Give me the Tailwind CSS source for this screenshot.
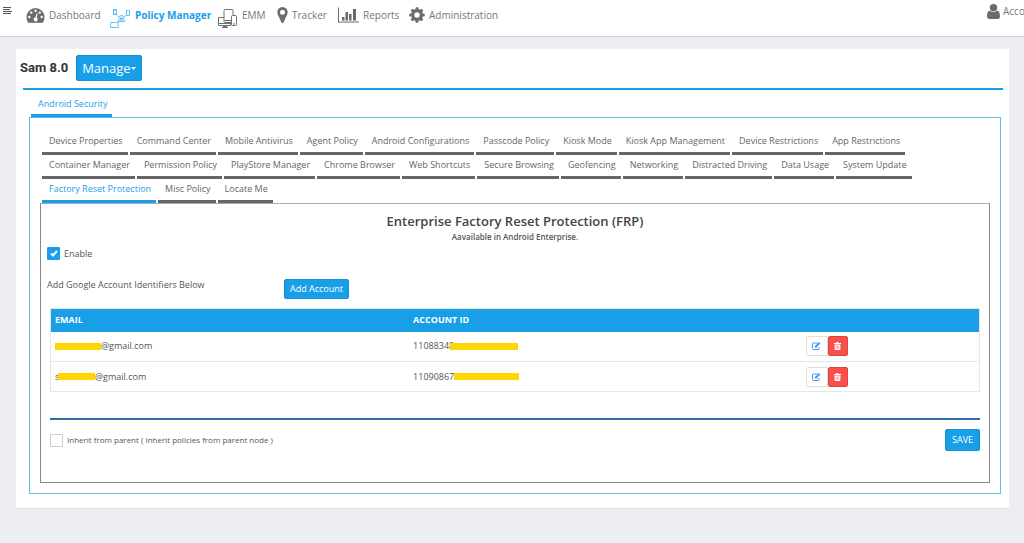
<!DOCTYPE html>
<html lang="en">
<head>
<meta charset="utf-8">
<meta name="viewport" content="width=device-width, initial-scale=1">
<title>Policy Manager</title>
<script src="https://cdn.jsdelivr.net/npm/@tailwindcss/browser@4"></script>
</head>
<body class="min-h-screen overflow-x-hidden bg-[#edeef3] font-['Open_Sans',sans-serif] text-[9px] leading-3 text-[#555]">
<header class="flex h-[37px] items-start overflow-hidden border-b border-[#d5d6da] bg-white text-[10px] leading-[14px] text-[#777]">
  <button type="button" aria-label="Menu" class="mt-[7px] ml-[3px] h-2 w-[9px] shrink-0">
    <svg viewBox="0 0 9 8" class="block h-2 w-[9px]" stroke="#555" stroke-width="1"><path d="M0 .5h8M0 2.500h7M0 4.500h9M0 6.500h8"/></svg>
  </button>
  <nav class="ml-[14px] flex flex-1 items-start">
    <a href="#" class="flex w-[84px] shrink-0 items-start gap-1">
      <svg viewBox="0 0 18 15" class="mt-2 block h-[15px] w-[19px]"><path fill="#6b6b6b" d="M9 0a9 9 0 0 0-9 9c0 2 .5 3.700 1.400 5.200.2.400.5.500.8.500h13.600c.3 0 .6-.1.800-.5A9.500 9.500 0 0 0 18 9a9 9 0 0 0-9-9z"/><g fill="#fff"><circle cx="2.800" cy="9" r="1.200"/><circle cx="4.700" cy="4.600" r="1.200"/><circle cx="9" cy="2.700" r="1.200"/><circle cx="13.300" cy="4.600" r="1.200"/><circle cx="15.200" cy="9" r="1.200"/><path d="M10.200 5.200l1 .3-1 4a2.100 2.100 0 1 1-1.200-.3z"/></g></svg>
      <span class="mt-2">Dashboard</span>
    </a>
    <a href="#" class="flex w-[108px] shrink-0 items-start gap-[5px] font-bold text-[#189fe8]">
      <svg viewBox="0 0 20 20" class="mt-[8px] block h-5 w-5" fill="none" stroke="#42b2ed" stroke-width=".8"><rect x="3.500" y="1.500" width="3" height="5"/><path d="M3 2h4M3 6h4M16.500 2.500h3v5h-3zM.7 14.500h7.500v5H.7zM7 7.500l2.500 1.500M16 7.500l-2.500 1.500M7.500 14l1.500-1.500"/><circle cx="11.500" cy="9" r="1.700"/><path d="M8.500 13.500c0-3 1.300-3.200 3-3.200s3 .2 3 3.200zM10 10.500l1.500 2.500 1.500-2.500"/></svg>
      <span class="mt-2">Policy Manager</span>
    </a>
    <a href="#" class="flex w-[59px] shrink-0 items-start gap-1">
      <svg viewBox="0 0 20 20" class="mt-[9px] block h-5 w-5" fill="#fff" stroke="#707070" stroke-width="1"><path d="M.5 8.500h12v8H.5zM1 14.500h11M5 17.500h4M4 18.500h6"/><rect x="6" y=".5" width="9" height="13" rx="1"/><path d="M6.500 11.500h8"/><rect x="13.500" y="6.500" width="5" height="10" rx="1"/><path d="M15 15h2"/></svg>
      <span class="mt-2">EMM</span>
    </a>
    <a href="#" class="flex w-[61px] shrink-0 items-start gap-1">
      <svg viewBox="0 0 11 16" class="mt-[7px] block h-4 w-[11px]" fill="#6b6b6b" fill-rule="evenodd"><path d="M5.500 0A5.200 5.200 0 0 0 .3 5.300C.3 8 3 11.500 4.300 15.200c.3.900 2.100.9 2.400 0C8 11.500 10.700 8 10.700 5.300A5.200 5.200 0 0 0 5.500 0zm0 2.800a2.500 2.500 0 1 1 0 5 2.500 2.500 0 0 1 0-5z"/></svg>
      <span class="mt-2">Tracker</span>
    </a>
    <a href="#" class="flex w-[71px] shrink-0 items-start gap-1">
      <svg viewBox="0 0 21 16" class="mt-[7px] block h-4 w-[21px]" fill="#6b6b6b"><path d="M0 .5h1v14h20v1H0zM4 10h2.500v3.500H4zM7.500 5H10v8.500H7.500zM11 7h2.500v6.500H11zM15 2h3v11.500h-3z"/></svg>
      <span class="mt-2">Reports</span>
    </a>
    <a href="#" class="flex shrink-0 items-start gap-1">
      <svg viewBox="0 0 16 16" class="mt-[7px] block h-4 w-4" fill="#6b6b6b" fill-rule="evenodd"><path d="M6.800.3h2.400l.4 2 1.300.5 1.700-1.100 1.700 1.700-1.100 1.700.5 1.300 2 .4v2.400l-2 .4-.5 1.300 1.100 1.700-1.700 1.700-1.700-1.100-1.300.5-.4 2H6.800l-.4-2-1.300-.5-1.700 1.100-1.700-1.700 1.100-1.700-.5-1.300-2-.4V6.800l2-.4.5-1.300-1.100-1.700 1.700-1.700 1.700 1.100 1.300-.5zM8 5.300a2.700 2.700 0 1 0 0 5.400 2.700 2.700 0 0 0 0-5.400z"/></svg>
      <span class="mt-2">Administration</span>
    </a>
  </nav>
  <a href="#" class="mt-1 flex w-[37px] shrink-0 items-start gap-[3px] whitespace-nowrap">
    <svg viewBox="0 0 13 15" class="block h-[15px] w-[13px] shrink-0" fill="#6b6b6b"><circle cx="6.500" cy="3.800" r="3.700"/><path d="M3 6.800C.7 7 0 9.500 0 12.300 0 14 1 15 2.500 15h8c1.500 0 2.500-1 2.500-2.700 0-2.800-.7-5.300-3-5.500a4.900 4.900 0 0 1-7 0z"/></svg>
    <span>Acco</span>
  </a>
</header>

<main class="mt-3 mr-[15px] mb-9 ml-4 border-b border-[#e2e3e6] bg-white px-[7px] pt-[6px] pb-[14px]">
  <div class="-ml-[3px] flex items-center gap-2">
    <h1 class="font-['Roboto',sans-serif] text-[13px] leading-5 font-bold text-[#333]">Sam 8.0</h1>
    <button type="button" class="flex h-[26px] items-center rounded-[2px] border border-[#1690d4] bg-[#189fe8] px-[5px] text-[13px] leading-4 text-white">Manage<svg viewBox="0 0 5 3" class="h-[3px] w-[5px]" fill="#fff"><path d="M0 0h5L2.500 3z"/></svg></button>
  </div>
  <div class="mt-[7px] -mr-px h-[2px] bg-[#189fe8]"></div>

  <div class="mr-px ml-[6px]">
    <a href="#" class="mt-[8px] ml-[2px] inline-block border-b-[3px] border-[#189fe8] pr-[5px] pb-1 pl-[7px] align-top text-[#189fe8]">Android Security</a>
    <section class="border border-[#60bdea] px-[10px] pt-[17px] pb-[10px]">
      <nav class="flex flex-wrap gap-x-[2px] gap-y-1 pr-[68px] pl-[2px] whitespace-nowrap text-[#666]">
        <a href="#" class="border-b-[3px] border-[#666] pr-[5px] pb-[5px] pl-[7px]">Device Properties</a>
        <a href="#" class="border-b-[3px] border-[#666] pr-[5px] pb-[5px] pl-[7px]">Command Center</a>
        <a href="#" class="border-b-[3px] border-[#666] pr-[5px] pb-[5px] pl-[7px]">Mobile Antivirus</a>
        <a href="#" class="border-b-[3px] border-[#666] pr-[5px] pb-[5px] pl-[7px]">Agent Policy</a>
        <a href="#" class="border-b-[3px] border-[#666] pr-[5px] pb-[5px] pl-[7px]">Android Configurations</a>
        <a href="#" class="border-b-[3px] border-[#666] pr-[5px] pb-[5px] pl-[7px]">Passcode Policy</a>
        <a href="#" class="border-b-[3px] border-[#666] pr-[5px] pb-[5px] pl-[7px]">Kiosk Mode</a>
        <a href="#" class="border-b-[3px] border-[#666] pr-[5px] pb-[5px] pl-[7px]">Kiosk App Management</a>
        <a href="#" class="border-b-[3px] border-[#666] pr-[5px] pb-[5px] pl-[7px]">Device Restrictions</a>
        <a href="#" class="border-b-[3px] border-[#666] pr-[5px] pb-[5px] pl-[7px]">App Restrictions</a>
        <a href="#" class="border-b-[3px] border-[#666] pr-[5px] pb-[5px] pl-[7px]">Container Manager</a>
        <a href="#" class="border-b-[3px] border-[#666] pr-[5px] pb-[5px] pl-[7px]">Permission Policy</a>
        <a href="#" class="border-b-[3px] border-[#666] pr-[5px] pb-[5px] pl-[7px]">PlayStore Manager</a>
        <a href="#" class="border-b-[3px] border-[#666] pr-[5px] pb-[5px] pl-[7px]">Chrome Browser</a>
        <a href="#" class="border-b-[3px] border-[#666] pr-[5px] pb-[5px] pl-[7px]">Web Shortcuts</a>
        <a href="#" class="border-b-[3px] border-[#666] pr-[5px] pb-[5px] pl-[7px]">Secure Browsing</a>
        <a href="#" class="border-b-[3px] border-[#666] pr-[5px] pb-[5px] pl-[7px]">Geofencing</a>
        <a href="#" class="border-b-[3px] border-[#666] pr-[5px] pb-[5px] pl-[7px]">Networking</a>
        <a href="#" class="border-b-[3px] border-[#666] pr-[5px] pb-[5px] pl-[7px]">Distracted Driving</a>
        <a href="#" class="border-b-[3px] border-[#666] pr-[5px] pb-[5px] pl-[7px]">Data Usage</a>
        <a href="#" class="border-b-[3px] border-[#666] pr-[5px] pb-[5px] pl-[7px]">System Update</a>
        <a href="#" aria-current="page" class="border-b-[3px] border-[#189fe8] pr-[5px] pb-[5px] pl-[7px] text-[#189fe8]">Factory Reset Protection</a>
        <a href="#" class="border-b-[3px] border-[#666] pr-[5px] pb-[5px] pl-[7px]">Misc Policy</a>
        <a href="#" class="border-b-[3px] border-[#666] pr-[5px] pb-[5px] pl-[7px]">Locate Me</a>
      </nav>

      <div class="border border-[#888] border-t-[#aaa] px-[9px] pt-[9px] pb-[31px]">
        <h2 class="text-center text-[13px] leading-4 font-semibold text-[#444]">Enterprise Factory Reset Protection (FRP)</h2>
        <p class="mt-[2px] text-center text-[8px] leading-3 font-semibold text-[#555]">Aavailable in Android Enterprise.</p>
        <div class="-ml-[3px]">
          <label class="mt-[4px] flex w-fit items-center gap-1">
            <span class="grid size-[13px] place-items-center">
              <input type="checkbox" checked class="col-start-1 row-start-1 size-[13px] appearance-none rounded-[1px] border border-[#ccc] checked:border-[#189fe8] checked:bg-[#189fe8]">
              <svg viewBox="0 0 8 7" class="pointer-events-none z-10 col-start-1 row-start-1 h-[7px] w-2" fill="none" stroke="#fff" stroke-width="2"><path d="M1 3.500l2 2 4-4.500"/></svg>
            </span>
            Enable
          </label>
          <div class="mt-[19px] flex items-start">
            <p class="w-[237px]">Add Google Account Identifiers Below</p>
            <button type="button" class="h-5 rounded-[2px] border border-[#1690d4] bg-[#189fe8] px-[5px] text-white">Add Account</button>
          </div>
        </div>
        <table class="mt-[9px] w-full table-fixed border-collapse border border-[#e6e6e6] text-left">
          <colgroup><col class="w-[38.6%]"><col><col class="w-[18.7%]"></colgroup>
          <thead class="bg-[#189fe8] text-white">
            <tr class="h-[23px]"><th class="pl-1 font-bold" scope="col">EMAIL</th><th class="pl-1 font-bold" scope="col">ACCOUNT ID</th><th aria-label="Actions"></th></tr>
          </thead>
          <tbody>
            <tr class="h-[30px] border-b border-[#e6e6e6]">
              <td class="pl-1"><span class="flex items-center"><i class="h-[7px] w-[46px] bg-[#ffd600]"></i>@gmail.com</span></td>
              <td class="pl-1"><span class="flex items-center">11088348<i class="z-10 -ml-1 h-[7px] w-[68px] bg-[#ffd600]"></i></span></td>
              <td><div class="flex">
                <button type="button" aria-label="Edit" class="grid h-5 w-[22px] place-items-center rounded-l-[2px] border border-[#ddd] bg-white"><svg viewBox="0 0 9 8" class="h-2 w-[9px]" fill="none" stroke="#3f9bf0"><path d="M5.500 1H1.500Q.5 1 .5 2v4.500q0 1 1 1H6q1 0 1-1V5"/><path stroke-width="2" d="M3.200 5.300L7.700.8"/></svg></button>
                <button type="button" aria-label="Delete" class="grid h-5 w-5 place-items-center rounded-[2px] border border-[#dc4545] bg-[#f9504e]"><svg viewBox="0 0 7 8" class="h-2 w-[7px]"><path fill="#fff" d="M0 1h2.200l.5-1h1.600l.5 1H7v1H0zM.6 2.400h5.800V7q0 1-1 1H1.600q-1 0-1-1z"/><path stroke="#f9504e" stroke-width=".5" d="M2.200 3.500v3.300M3.500 3.500v3.300M4.800 3.500v3.300"/></svg></button>
              </div></td>
            </tr>
            <tr class="h-[30px]">
              <td class="pl-1"><span class="flex items-center"><span class="w-[3px]">s</span><i class="z-10 h-[7px] w-[37px] bg-[#ffd600]"></i>@gmail.com</span></td>
              <td class="pl-1"><span class="flex items-center">11090867<i class="z-10 h-[7px] w-[65px] bg-[#ffd600]"></i></span></td>
              <td><div class="flex">
                <button type="button" aria-label="Edit" class="grid h-5 w-[22px] place-items-center rounded-l-[2px] border border-[#ddd] bg-white"><svg viewBox="0 0 9 8" class="h-2 w-[9px]" fill="none" stroke="#3f9bf0"><path d="M5.500 1H1.500Q.5 1 .5 2v4.500q0 1 1 1H6q1 0 1-1V5"/><path stroke-width="2" d="M3.200 5.300L7.700.8"/></svg></button>
                <button type="button" aria-label="Delete" class="grid h-5 w-5 place-items-center rounded-[2px] border border-[#dc4545] bg-[#f9504e]"><svg viewBox="0 0 7 8" class="h-2 w-[7px]"><path fill="#fff" d="M0 1h2.200l.5-1h1.600l.5 1H7v1H0zM.6 2.400h5.800V7q0 1-1 1H1.600q-1 0-1-1z"/><path stroke="#f9504e" stroke-width=".5" d="M2.200 3.500v3.300M3.500 3.500v3.300M4.800 3.500v3.300"/></svg></button>
              </div></td>
            </tr>
          </tbody>
        </table>
        <div class="mt-[26px] flex items-center justify-between border-t-2 border-[#326ba8] pt-[9px]">
          <label class="flex items-center gap-1 text-[8px]">
            <input type="checkbox" class="size-[13px] appearance-none rounded-[1px] border border-[#ccc] bg-white checked:bg-[#189fe8]">
            Inherit from parent ( Inherit policies from parent node )
          </label>
          <button type="button" class="h-[22px] rounded-[2px] border border-[#1690d4] bg-[#189fe8] px-[6px] text-[9px] text-white">SAVE</button>
        </div>
      </div>
    </section>
  </div>
</main>
</body>
</html>
